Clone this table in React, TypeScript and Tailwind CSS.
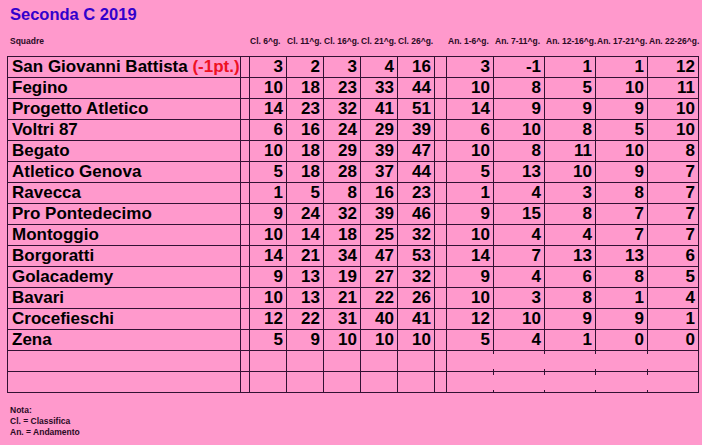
import React from "react";

type Row = { name: string; pen?: string; cl: number[]; an: number[] };

const rows: Row[] = [
  { name: "San Giovanni Battista", pen: "(-1pt.)", cl: [3, 2, 3, 4, 16], an: [3, -1, 1, 1, 12] },
  { name: "Fegino", cl: [10, 18, 23, 33, 44], an: [10, 8, 5, 10, 11] },
  { name: "Progetto Atletico", cl: [14, 23, 32, 41, 51], an: [14, 9, 9, 9, 10] },
  { name: "Voltri 87", cl: [6, 16, 24, 29, 39], an: [6, 10, 8, 5, 10] },
  { name: "Begato", cl: [10, 18, 29, 39, 47], an: [10, 8, 11, 10, 8] },
  { name: "Atletico Genova", cl: [5, 18, 28, 37, 44], an: [5, 13, 10, 9, 7] },
  { name: "Ravecca", cl: [1, 5, 8, 16, 23], an: [1, 4, 3, 8, 7] },
  { name: "Pro Pontedecimo", cl: [9, 24, 32, 39, 46], an: [9, 15, 8, 7, 7] },
  { name: "Montoggio", cl: [10, 14, 18, 25, 32], an: [10, 4, 4, 7, 7] },
  { name: "Borgoratti", cl: [14, 21, 34, 47, 53], an: [14, 7, 13, 13, 6] },
  { name: "Golacademy", cl: [9, 13, 19, 27, 32], an: [9, 4, 6, 8, 5] },
  { name: "Bavari", cl: [10, 13, 21, 22, 26], an: [10, 3, 8, 1, 4] },
  { name: "Crocefieschi", cl: [12, 22, 31, 40, 41], an: [12, 10, 9, 9, 1] },
  { name: "Zena", cl: [5, 9, 10, 10, 10], an: [5, 4, 1, 0, 0] },
];

const anW = ["w-[47px]", "w-[51px]", "w-[51px]", "w-[52px]", "w-[51px]"];
const clHeads = ["Cl. 6^g.", "Cl. 11^g.", "Cl. 16^g.", "Cl. 21^g.", "Cl. 26^g."];
const anHeads = ["An. 1-6^g.", "An. 7-11^g.", "An. 12-16^g.", "An. 17-21^g.", "An. 22-26^g."];

const cell = "shrink-0 border-r border-[#331133] h-[20px] leading-[20px]";

export default function App() {
  return (
    <div
      className="w-[702px] h-[445px] bg-[#ff99cc] text-black overflow-hidden"
      style={{ fontFamily: '"Liberation Sans", Arial, sans-serif' }}
    >
      <div className="pl-[10px] pt-[4px] h-[30px] text-[16.5px] font-bold text-[#3300cc] leading-[20px]">
        Seconda C 2019
      </div>
      <div className="flex h-[22px] items-center text-[8.5px] font-bold text-[#2a0a24]">
        <div className="w-[249px] pl-[10px] shrink-0">Squadre</div>
        {clHeads.map((h) => (
          <div key={h} className="w-[37px] shrink-0 pl-[1px] whitespace-nowrap">
            {h}
          </div>
        ))}
        <div className="w-[13px] shrink-0" />
        {anHeads.map((h, i) => (
          <div key={h} className={`${anW[i]} shrink-0 pl-[1px] whitespace-nowrap`}>
            {h}
          </div>
        ))}
      </div>
      <div className="ml-[7px] mt-[4px] w-[692px] border-l border-t border-[#331133] text-[17px] font-bold">
        {rows.map((r) => (
          <div key={r.name} className="flex border-b border-[#331133]">
            <div className={`${cell} w-[233px] pl-[4px] whitespace-nowrap overflow-hidden`}>
              {r.name}
              {r.pen && <span className="text-[#ee1122]"> {r.pen}</span>}
            </div>
            <div className={`${cell} w-[9px]`} />
            {r.cl.map((v, i) => (
              <div key={i} className={`${cell} w-[37px] text-right pr-[3px]`}>
                {v}
              </div>
            ))}
            <div className={`${cell} w-[12px]`} />
            {r.an.map((v, i) => (
              <div key={i} className={`${cell} ${anW[i]} text-right pr-[3px]`}>
                {v}
              </div>
            ))}
          </div>
        ))}
        {[0, 1].map((k) => (
          <div key={k} className="flex border-b border-[#331133]">
            <div className={`${cell} w-[233px]`} />
            <div className={`${cell} w-[9px]`} />
            {[0, 1, 2, 3, 4].map((i) => (
              <div key={i} className={`${cell} w-[37px]`} />
            ))}
            <div className={`${cell} w-[12px]`} />
            {[0, 1, 2, 3, 4].map((i) =>
              i < 4 ? (
                <div
                  key={i}
                  className={`shrink-0 h-[20px] border-r border-transparent relative ${anW[i]}`}
                >
                  <span className="absolute right-[-1px] top-0 h-[3px] w-px bg-[#331133]" />
                  <span className="absolute right-[-1px] bottom-0 h-[2px] w-px bg-[#331133]" />
                </div>
              ) : (
                <div key={i} className={`${cell} ${anW[i]}`} />
              )
            )}
          </div>
        ))}
      </div>
      <div className="pl-[10px] pt-[12px] text-[8.5px] font-bold text-[#2a0a24] leading-[11px]">
        <div>Nota:</div>
        <div>Cl. = Classifica</div>
        <div>An. = Andamento</div>
      </div>
    </div>
  );
}
